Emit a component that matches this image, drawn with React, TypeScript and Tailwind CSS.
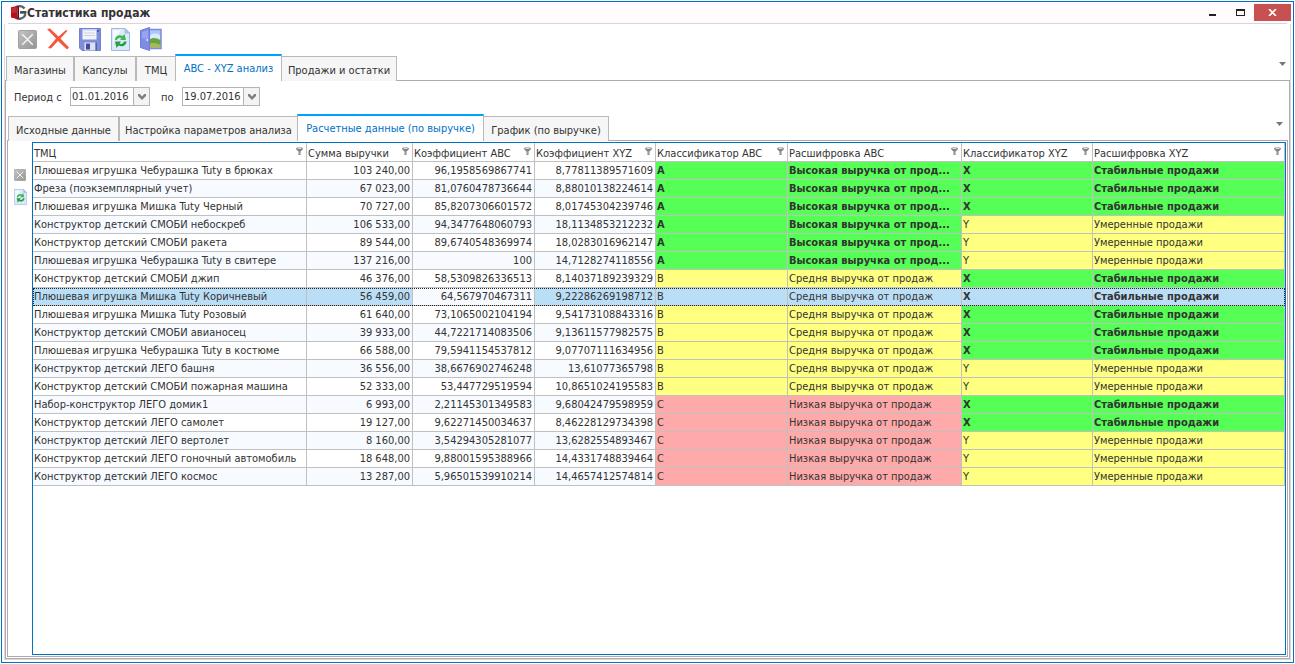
import { ReactNode } from "react";
import clsx from "clsx";

type Tone = "green" | "yellow" | "red";

const toneClass: Record<Tone, string> = {
  green: "bg-[#55ff55] font-bold",
  yellow: "bg-[#ffff80]",
  red: "bg-[#ffaaaa]",
};

const abcInfo: Record<string, { text: string; tone: Tone }> = {
  A: { text: "Высокая выручка от прод...", tone: "green" },
  B: { text: "Средня выручка от продаж", tone: "yellow" },
  C: { text: "Низкая выручка от продаж", tone: "red" },
};

const xyzInfo: Record<string, { text: string; tone: Tone }> = {
  X: { text: "Стабильные продажи", tone: "green" },
  Y: { text: "Умеренные продажи", tone: "yellow" },
};

const rows: [string, string, string, string, string, string][] = [
  ["Плюшевая игрушка Чебурашка Tuty в брюках", "103 240,00", "96,1958569867741", "8,77811389571609", "A", "X"],
  ["Фреза (поэкземплярный учет)", "67 023,00", "81,0760478736644", "8,88010138224614", "A", "X"],
  ["Плюшевая игрушка Мишка Tuty Черный", "70 727,00", "85,8207306601572", "8,01745304239746", "A", "X"],
  ["Конструктор детский СМОБИ небоскреб", "106 533,00", "94,3477648060793", "18,1134853212232", "A", "Y"],
  ["Конструктор детский СМОБИ ракета", "89 544,00", "89,6740548369974", "18,0283016962147", "A", "Y"],
  ["Плюшевая игрушка Чебурашка Tuty в свитере", "137 216,00", "100", "14,7128274118556", "A", "Y"],
  ["Конструктор детский СМОБИ джип", "46 376,00", "58,5309826336513", "8,14037189239329", "B", "X"],
  ["Плюшевая игрушка Мишка Tuty Коричневый", "56 459,00", "64,567970467311", "9,22286269198712", "B", "X"],
  ["Плюшевая игрушка Мишка Tuty Розовый", "61 640,00", "73,1065002104194", "9,54173108843316", "B", "X"],
  ["Конструктор детский СМОБИ авианосец", "39 933,00", "44,7221714083506", "9,13611577982575", "B", "X"],
  ["Плюшевая игрушка Чебурашка Tuty в костюме", "66 588,00", "79,5941154537812", "9,07707111634956", "B", "X"],
  ["Конструктор детский ЛЕГО башня", "36 556,00", "38,6676902746248", "13,61077365798", "B", "Y"],
  ["Конструктор детский СМОБИ пожарная машина", "52 333,00", "53,447729519594", "10,8651024195583", "B", "Y"],
  ["Набор-конструктор ЛЕГО домик1", "6 993,00", "2,21145301349583", "9,68042479598959", "C", "X"],
  ["Конструктор детский ЛЕГО самолет", "19 127,00", "9,62271450034637", "8,46228129734398", "C", "X"],
  ["Конструктор детский ЛЕГО вертолет", "8 160,00", "3,54294305281077", "13,6282554893467", "C", "Y"],
  ["Конструктор детский ЛЕГО гоночный автомобиль", "18 648,00", "9,88001595388966", "14,4331748839464", "C", "Y"],
  ["Конструктор детский ЛЕГО космос", "13 287,00", "5,96501539910214", "14,4657412574814", "C", "Y"],
];

const selectedRow = 7;

const columns: { title: string; width: string }[] = [
  { title: "ТМЦ", width: "w-[274px]" },
  { title: "Сумма выручки", width: "w-[106px]" },
  { title: "Коэффициент ABC", width: "w-[122px]" },
  { title: "Коэффициент XYZ", width: "w-[121px]" },
  { title: "Классификатор ABC", width: "w-[132px]" },
  { title: "Расшифровка ABC", width: "w-[174px]" },
  { title: "Классификатор XYZ", width: "w-[131px]" },
  { title: "Расшифровка XYZ", width: "" },
];

function LogoIcon() {
  return (
    <svg viewBox="0 0 17 17" className="h-[17px] w-[17px]" aria-hidden="true">
      <path d="M14.500 4.600A6.300 6.300 0 1 0 15 11.500V8.500H10" fill="none" stroke="#59636b" strokeWidth="2.400" />
      <path d="M10 8h6.500" stroke="#39434b" strokeWidth="1.500" />
      <path d="M1 3.200 7.500 2v13L1 13.500Z" fill="#b3101c" />
      <path d="M7.500 2 9 3v11l-1.500 1Z" fill="#5c070d" />
      <path d="M1.500 4 6.500 3v5.500l-5 .5Z" fill="#d83a41" opacity=".6" />
    </svg>
  );
}

function CloseBoxIcon({ className }: { className: string }) {
  return (
    <svg viewBox="0 0 18 18" className={className} aria-hidden="true">
      <defs>
        <linearGradient id="boxFill" x1="0" y1="0" x2="1" y2="1">
          <stop offset="0" stopColor="#c4c4c4" />
          <stop offset="1" stopColor="#939393" />
        </linearGradient>
      </defs>
      <rect x=".5" y=".5" width="17" height="17" rx="1.500" fill="url(#boxFill)" stroke="#a0a0a0" />
      <path d="m4 4 10 10M14 4 4 14" stroke="#f4f4f4" strokeWidth="1.400" />
    </svg>
  );
}

function DeleteIcon() {
  return (
    <svg viewBox="0 0 22 22" className="h-[22px] w-[22px]" aria-hidden="true">
      <path d="M0 1 3 .5 11.500 8.500 19 2l1.500.8-7 7.700L22 19.500 20 21.500 11 13 4 20.500 1 20 9 10.500Z" fill="#f4583c" />
    </svg>
  );
}

function SaveIcon() {
  return (
    <svg viewBox="0 0 22 23" className="h-[23px] w-[22px]" aria-hidden="true">
      <path d="M.5.5h21v22H3L.5 20Z" fill="#7f8ed9" stroke="#7080cf" />
      <path d="M3.500 1h14v10.500h-14Z" fill="#f3f4fb" />
      <path d="M3.500 1h14v1.500h-14Z" fill="#c9cfee" />
      <path d="M5 5h11M5 7.500h11" stroke="#cdd0de" />
      <path d="M19 2v2" stroke="#3e4c9e" strokeWidth="1.500" />
      <path d="M5.500 14.500h11v8h-11Z" fill="#dfe2ee" />
      <path d="M7 15.500h4v6H7Z" fill="#3f4d9c" />
      <path d="M16.500 14.500h1.500v8h-1.500Z" fill="#5363bb" />
    </svg>
  );
}

function RefreshIcon({ className }: { className: string }) {
  return (
    <svg viewBox="0 0 19 23" className={className} aria-hidden="true">
      <path d="M.5.5H14L18.500 5v17.500H.5Z" fill="#dbe9fa" stroke="#9dbbe2" />
      <path d="M2 2h8L2 15Z" fill="#f7fbff" />
      <path d="M14 .5V5h4.500Z" fill="#a9c6ea" stroke="#8fb0dc" strokeWidth=".6" />
      <path d="M4 12c0-4 4-6 7.500-4L13.500 6l1.500 6H9l1.500-1.800C8.500 9 6.500 10 6 12Z" fill="#3cba50" />
      <path d="M15.500 13.500c0 4-4.500 6-8 4L5.500 20 4 13.500H10l-1.500 2c2 1 4 0 4.500-2Z" fill="#25a03e" />
    </svg>
  );
}

function ExitIcon() {
  return (
    <svg viewBox="0 0 22 24" className="h-[24px] w-[22px]" aria-hidden="true">
      <path d="M8 2.500h13v19H8Z" fill="#a9c9fb" stroke="#7d8ae0" strokeWidth="1.500" />
      <path d="M10 9c2-3 6-3 10-1v5H10Z" fill="#d9e9ff" />
      <path d="M9 13c4-3 7-2 11.500 0v8H9Z" fill="#6aa33c" />
      <path d="M9 17c4-2 7-1 11.500 1v3H9Z" fill="#a9b765" />
      <path d="M.5 3.500 9.500.5v23l-9-3Z" fill="#7f8ce6" stroke="#6f7cd4" />
      <path d="M2 5 8 3v9l-6-1Z" fill="#97a3f0" />
      <path d="M6.500 12h1.500v2H6.500Z" fill="#dfe4ff" />
    </svg>
  );
}

function FilterIcon() {
  return (
    <svg viewBox="0 0 7 8" className="h-[8px] w-[7px]" aria-hidden="true">
      <path d="M1 .5h5l1 1-.5 1.200L4.500 4.500V8h-2V4.500L.5 2.700 0 1.500Z" fill="#858585" />
      <path d="M1.500 1.200h4v.8h-4Z" fill="#f2f2f2" />
      <path d="M3.400 4.500h1V7h-1Z" fill="#b5b5b5" />
    </svg>
  );
}

function TabMenuButton({ label }: { label: string }) {
  return (
    <button type="button" aria-label={label} className="mt-2 mr-1 ml-auto flex h-1 w-[7px]">
      <svg viewBox="0 0 7 4" className="h-1 w-[7px]" aria-hidden="true">
        <path d="M0 0h7L3.500 4Z" fill="#777" />
      </svg>
    </button>
  );
}

function Tab({ children, width, active = false }: { children: ReactNode; width: string; active?: boolean }) {
  return (
    <button
      type="button"
      role="tab"
      aria-selected={active}
      className={clsx(
        "shrink-0 border-x border-[#b9b9b9] text-center whitespace-nowrap",
        width,
        active
          ? "z-10 -mx-px h-[27px] border-t-2 border-t-[#00a2ff] bg-white text-[#0072c6]"
          : "mt-[2px] h-[25px] border-t bg-[#f6f6f6] pt-[3px]",
      )}
    >
      {children}
    </button>
  );
}

function DateField({ id, value, width }: { id: string; value: string; width: string }) {
  return (
    <div className={clsx("flex h-[19px] border border-[#b4b4b4] bg-white", width)}>
      <input id={id} defaultValue={value} className="w-0 flex-1 px-px outline-none" />
      <button type="button" aria-label="Открыть календарь" className="flex w-4 items-center justify-center border-l border-[#b4b4b4] bg-[#f3f3f3]">
        <svg viewBox="0 0 8 6" className="h-1.5 w-2" aria-hidden="true">
          <path d="M0 0h1.800L4 2.600 6.200 0H8v2L4 6 0 2Z" fill="#808080" />
        </svg>
      </button>
    </div>
  );
}

function SalesTable() {
  return (
    <table className="w-full table-fixed border-separate border-spacing-0">
      <colgroup>
        {columns.map((c) => (
          <col key={c.title} className={c.width} />
        ))}
      </colgroup>
      <thead>
        <tr className="h-[19px]">
          {columns.map((c) => (
            <th key={c.title} scope="col" className="border-r border-b border-[#c0c0c0] p-0 text-left font-normal">
              <div className="flex h-[18px] items-start justify-between pl-px">
                <span className="leading-[21px] whitespace-nowrap">{c.title}</span>
                <button type="button" aria-label={`Фильтр: ${c.title}`} className="mt-1 mr-[3px]">
                  <FilterIcon />
                </button>
              </div>
            </th>
          ))}
        </tr>
      </thead>
      <tbody>
        {rows.map(([name, sum, kAbc, kXyz, abc, xyz], i) => {
          const selected = i === selectedRow;
          const base = "h-[18px] border-r border-b border-[#c0c0c0] pt-px pr-0.5 pb-0 pl-px leading-4 whitespace-nowrap overflow-hidden";
          const plain = selected ? "bg-[#bbdef7]" : i % 2 ? "bg-[#f7faff]" : "bg-white";
          const tone = (t: Tone) => clsx(toneClass[t], selected && "bg-[#bbdef7]!");
          return (
            <tr
              key={name}
              aria-selected={selected}
              className={clsx(selected && "outline-1 -outline-offset-1 outline-[#222] outline-dotted")}
            >
              <td className={clsx(base, plain)}>{name}</td>
              <td className={clsx(base, plain, "text-right")}>{sum}</td>
              <td className={clsx(base, selected ? "bg-[#f7faff]" : plain, "text-right")}>{kAbc}</td>
              <td className={clsx(base, plain, "text-right")}>{kXyz}</td>
              <td className={clsx(base, tone(abcInfo[abc].tone))}>{abc}</td>
              <td className={clsx(base, tone(abcInfo[abc].tone))}>{abcInfo[abc].text}</td>
              <td className={clsx(base, tone(xyzInfo[xyz].tone))}>{xyz}</td>
              <td className={clsx(base, tone(xyzInfo[xyz].tone))}>{xyzInfo[xyz].text}</td>
            </tr>
          );
        })}
      </tbody>
    </table>
  );
}

export default function App() {
  return (
    <div className="flex min-h-screen bg-white p-px font-['DejaVu_Sans_Condensed','DejaVu_Sans',sans-serif] text-[11px] leading-4 text-[#333]">
      <div className="flex min-w-0 flex-1 flex-col border border-[#0072c6]">
        <header className="flex h-[21px] items-center bg-[#fffbff] pr-0.5 pl-2">
          <LogoIcon />
          <h1 className="text-[12px] font-bold text-[#333]">Статистика продаж</h1>
          <div className="ml-auto flex h-[17px] items-stretch">
            <button type="button" aria-label="Свернуть" className="flex w-[27px] items-end justify-center pb-[5px]">
              <span className="h-0.5 w-[7px] bg-[#222]" />
            </button>
            <button type="button" aria-label="Развернуть" className="flex w-[28px] items-center justify-center">
              <span className="h-[7px] w-[9px] border border-t-2 border-[#222]" />
            </button>
            <button type="button" aria-label="Закрыть" className="flex w-[37px] items-center justify-center bg-[#c75050]">
              <svg viewBox="0 0 9 7" className="h-[7px] w-[9px]" aria-hidden="true">
                <path d="m1 0 7 7M8 0 1 7" stroke="#fff" strokeWidth="1.700" />
              </svg>
            </button>
          </div>
        </header>
        <div className="mx-1.5 h-px bg-[#d9d6d9]" />

        <div className="mx-0.5 mb-0.5 flex flex-1 flex-col border-x border-b border-[#dcdadc]">
          <div role="toolbar" aria-label="Действия" className="flex h-[30px] items-center gap-2.5 pl-[13px]">
            <button type="button" aria-label="Закрыть вкладку" className="w-[19px]">
              <CloseBoxIcon className="h-[19px] w-[19px]" />
            </button>
            <button type="button" aria-label="Удалить">
              <DeleteIcon />
            </button>
            <button type="button" aria-label="Сохранить">
              <SaveIcon />
            </button>
            <button type="button" aria-label="Обновить">
              <RefreshIcon className="h-[23px] w-[19px]" />
            </button>
            <button type="button" aria-label="Выход">
              <ExitIcon />
            </button>
          </div>

          <div role="tablist" aria-label="Разделы" className="relative z-10 -mb-px flex h-[27px] pl-px">
            <Tab width="w-[68px]">Магазины</Tab>
            <Tab width="w-[62px]">Капсулы</Tab>
            <Tab width="w-[40px]">ТМЦ</Tab>
            <Tab width="w-[107px]" active>ABC - XYZ анализ</Tab>
            <Tab width="w-[116px]">Продажи и остатки</Tab>
            <TabMenuButton label="Список разделов" />
          </div>

          <main className="flex flex-1 flex-col border border-[#adaaad]">
            <form className="flex h-[33px] items-center pb-0.5 pl-2">
              <label htmlFor="from" className="w-14 pt-0.5">Период с</label>
              <DateField id="from" value="01.01.2016" width="w-20" />
              <label htmlFor="to" className="w-8 pt-0.5 pl-[11px]">по</label>
              <DateField id="to" value="19.07.2016" width="w-[78px]" />
            </form>

            <div role="tablist" aria-label="Данные анализа" className="relative z-10 -mb-px flex h-[27px] pr-0.5 pl-0.5">
              <Tab width="w-[111px]">Исходные данные</Tab>
              <Tab width="w-[179px]">Настройка параметров анализа</Tab>
              <Tab width="w-[187px]" active>Расчетные данные (по выручке)</Tab>
              <Tab width="w-[126px]">График (по выручке)</Tab>
              <TabMenuButton label="Список вкладок анализа" />
            </div>

            <section className="mx-px mb-px flex flex-1 border border-[#adaaad] pt-px pr-px pb-px">
              <div className="flex w-6 shrink-0 flex-col items-center gap-2 pt-[27px]">
                <button type="button" aria-label="Отменить">
                  <CloseBoxIcon className="h-3 w-3" />
                </button>
                <button type="button" aria-label="Обновить таблицу">
                  <RefreshIcon className="h-4 w-[13px]" />
                </button>
              </div>
              <div className="min-w-0 flex-1 border border-[#0072c6]">
                <SalesTable />
              </div>
            </section>
          </main>
        </div>
      </div>
    </div>
  );
}
